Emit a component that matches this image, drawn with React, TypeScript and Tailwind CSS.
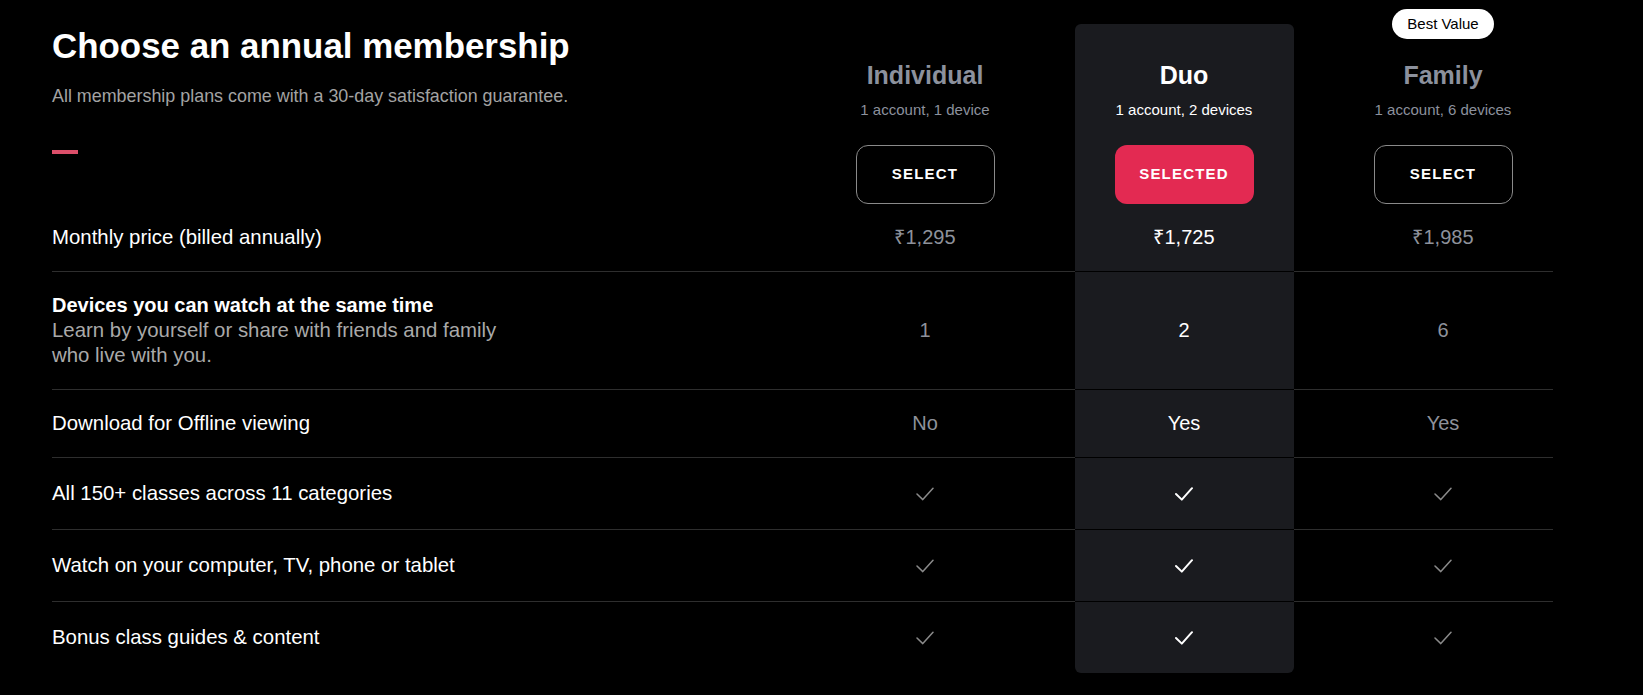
import React from "react";

type Val = string | { check: true };

const GRID = "grid grid-cols-[743.5px_259px_259px_239px]";
const LINE = "border-b border-[#2e2e2e]";

function Check({ active }: { active: boolean }) {
  return (
    <svg width="18" height="14" viewBox="0 0 18 14" fill="none">
      <polyline
        points="1,7 6.8,12.6 17,1.2"
        stroke={active ? "#ffffff" : "#8a8a8a"}
        strokeWidth={active ? 2 : 1.5}
        strokeLinecap="round"
        strokeLinejoin="round"
      />
    </svg>
  );
}

function Value({ v, active }: { v: Val; active: boolean }) {
  if (typeof v !== "string") {
    return (
      <div className="h-[29px] flex items-center justify-center">
        <Check active={active} />
      </div>
    );
  }
  return (
    <div className={`text-[20px] leading-[25px] ${active ? "text-white" : "text-[#8e929b]"}`}>{v}</div>
  );
}

function Row({
  label,
  values,
  last,
}: {
  label: React.ReactNode;
  values: [Val, Val, Val];
  last?: boolean;
}) {
  const line = last ? "" : LINE;
  return (
    <div className={GRID}>
      <div className={`py-[21px] flex items-center ${line}`}>{label}</div>
      <div className={`px-5 py-[21px] flex items-center justify-center ${line}`}>
        <Value v={values[0]} active={false} />
      </div>
      <div className="flex">
        <div className={`w-5 ${line}`} />
        <div
          className={`flex-1 bg-[#1a1b1f] py-[21px] flex items-center justify-center ${
            last ? "rounded-b-[6px]" : "border-b border-black"
          }`}
        >
          <Value v={values[1]} active={true} />
        </div>
        <div className={`w-5 ${line}`} />
      </div>
      <div className={`pl-5 py-[21px] flex items-center justify-center ${line}`}>
        <Value v={values[2]} active={false} />
      </div>
    </div>
  );
}

function PlanHead({
  name,
  sub,
  selected,
}: {
  name: string;
  sub: string;
  selected?: boolean;
}) {
  return (
    <div className="flex flex-col items-center">
      <div
        className={`text-[25px] leading-[30px] font-bold ${selected ? "text-white" : "text-[#8c919d]"}`}
      >
        {name}
      </div>
      <div
        className={`mt-[10px] text-[15px] leading-[20px] ${selected ? "text-white" : "text-[#8c919d]"}`}
      >
        {sub}
      </div>
      {selected ? (
        <button className="mt-[25px] w-[139px] h-[59px] rounded-[12px] bg-[#e32a52] text-white text-[15px] font-bold tracking-[1.2px]">
          SELECTED
        </button>
      ) : (
        <button className="mt-[25px] w-[139px] h-[59px] rounded-[12px] border border-[#8a8a8a] bg-black text-white text-[15px] font-bold tracking-[1.2px]">
          SELECT
        </button>
      )}
    </div>
  );
}

const labelCls = "text-[20.4px] leading-[25px] text-white";

export default function App() {
  const c: Val = { check: true };
  return (
    <div className="min-h-screen w-full bg-black font-['Liberation_Sans',Arial,sans-serif] text-white">
      <div className="pl-[52px] pt-6">
        {/* header */}
        <div className={GRID}>
          <div className="flex flex-col items-start">
            <h1 className="mt-[2px] text-[34.9px] leading-[40px] font-bold text-white">
              Choose an annual membership
            </h1>
            <p className="mt-[18px] text-[17.9px] leading-[25px] text-[#a3a3a3]">
              All membership plans come with a 30-day satisfaction guarantee.
            </p>
            <div className="mt-[41px] h-1 w-[26px] bg-[#dc4f6a]" />
          </div>
          <div className="px-5 pt-[36px]">
            <PlanHead name="Individual" sub="1 account, 1 device" />
          </div>
          <div className="flex">
            <div className="w-5" />
            <div className="flex-1 bg-[#1a1b1f] rounded-t-[6px] pt-[36px]">
              <PlanHead name="Duo" sub="1 account, 2 devices" selected />
            </div>
            <div className="w-5" />
          </div>
          <div className="pl-5 pt-[36px] relative">
            <div className="absolute top-[-15px] left-5 right-0 flex justify-center">
              <span className="h-[30px] px-[15px] rounded-full bg-white text-black text-[15px] leading-[30px]">
                Best Value
              </span>
            </div>
            <PlanHead name="Family" sub="1 account, 6 devices" />
          </div>
        </div>

        <Row
          label={<span className={labelCls}>Monthly price (billed annually)</span>}
          values={["₹1,295", "₹1,725", "₹1,985"]}
        />
        <Row
          label={
            <div className="max-w-[470px] leading-[25px]">
              <div className="text-[20px] font-bold text-white">Devices you can watch at the same time</div>
              <div className="text-[20.4px] text-[#a9a9a9]">
                Learn by yourself or share with friends and family who live with you.
              </div>
            </div>
          }
          values={["1", "2", "6"]}
        />
        <Row
          label={<span className={labelCls}>Download for Offline viewing</span>}
          values={["No", "Yes", "Yes"]}
        />
        <Row
          label={<span className={labelCls}>All 150+ classes across 11 categories</span>}
          values={[c, c, c]}
        />
        <Row
          label={<span className={labelCls}>Watch on your computer, TV, phone or tablet</span>}
          values={[c, c, c]}
        />
        <Row
          label={<span className={labelCls}>Bonus class guides &amp; content</span>}
          values={[c, c, c]}
          last
        />
      </div>
    </div>
  );
}
